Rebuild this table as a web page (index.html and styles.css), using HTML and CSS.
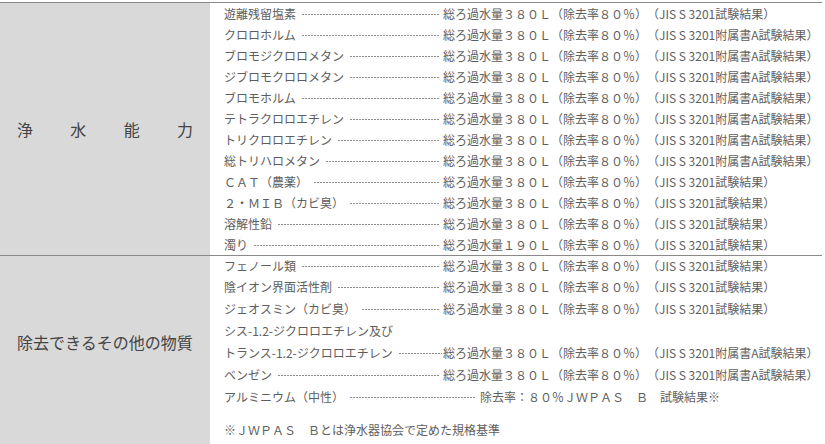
FILE: index.html
```html
<!DOCTYPE html>
<html lang="ja">
<head>
  <meta charset="UTF-8" />
  <title>浄水能力</title>
  <meta name="viewport" content="width=device-width, initial-scale=1.0"/>
  <link rel="stylesheet" href="styles.css">
</head>
<body>
  <div class="spec">

    <div class="section">
      <div class="label label-spread">
        <span>浄</span><span>水</span><span>能</span><span>力</span>
      </div>
      <ul class="list">
        <li class="item"><span class="head"><span class="name">遊離残留塩素</span><span class="leader"></span></span><span class="value">総ろ過水量３８０Ｌ（除去率８０％）（JIS S 3201試験結果）</span></li>
        <li class="item"><span class="head"><span class="name">クロロホルム</span><span class="leader"></span></span><span class="value">総ろ過水量３８０Ｌ（除去率８０％）（JIS S 3201附属書A試験結果）</span></li>
        <li class="item"><span class="head"><span class="name">ブロモジクロロメタン</span><span class="leader"></span></span><span class="value">総ろ過水量３８０Ｌ（除去率８０％）（JIS S 3201附属書A試験結果）</span></li>
        <li class="item"><span class="head"><span class="name">ジブロモクロロメタン</span><span class="leader"></span></span><span class="value">総ろ過水量３８０Ｌ（除去率８０％）（JIS S 3201附属書A試験結果）</span></li>
        <li class="item"><span class="head"><span class="name">ブロモホルム</span><span class="leader"></span></span><span class="value">総ろ過水量３８０Ｌ（除去率８０％）（JIS S 3201附属書A試験結果）</span></li>
        <li class="item"><span class="head"><span class="name">テトラクロロエチレン</span><span class="leader"></span></span><span class="value">総ろ過水量３８０Ｌ（除去率８０％）（JIS S 3201附属書A試験結果）</span></li>
        <li class="item"><span class="head"><span class="name">トリクロロエチレン</span><span class="leader"></span></span><span class="value">総ろ過水量３８０Ｌ（除去率８０％）（JIS S 3201附属書A試験結果）</span></li>
        <li class="item"><span class="head"><span class="name">総トリハロメタン</span><span class="leader"></span></span><span class="value">総ろ過水量３８０Ｌ（除去率８０％）（JIS S 3201附属書A試験結果）</span></li>
        <li class="item"><span class="head"><span class="name">ＣＡＴ（農薬）</span><span class="leader"></span></span><span class="value">総ろ過水量３８０Ｌ（除去率８０％）（JIS S 3201試験結果）</span></li>
        <li class="item"><span class="head"><span class="name">２・ＭＩＢ（カビ臭）</span><span class="leader"></span></span><span class="value">総ろ過水量３８０Ｌ（除去率８０％）（JIS S 3201試験結果）</span></li>
        <li class="item"><span class="head"><span class="name">溶解性鉛</span><span class="leader"></span></span><span class="value">総ろ過水量３８０Ｌ（除去率８０％）（JIS S 3201試験結果）</span></li>
        <li class="item"><span class="head"><span class="name">濁り</span><span class="leader"></span></span><span class="value">総ろ過水量１９０Ｌ（除去率８０％）（JIS S 3201試験結果）</span></li>
      </ul>
    </div>

    <div class="section section-other">
      <div class="label label-top">除去できるその他の物質</div>
      <ul class="list list-loose">
        <li class="item"><span class="head"><span class="name">フェノール類</span><span class="leader"></span></span><span class="value">総ろ過水量３８０Ｌ（除去率８０％）（JIS S 3201試験結果）</span></li>
        <li class="item"><span class="head"><span class="name">陰イオン界面活性剤</span><span class="leader"></span></span><span class="value">総ろ過水量３８０Ｌ（除去率８０％）（JIS S 3201試験結果）</span></li>
        <li class="item"><span class="head"><span class="name">ジェオスミン（カビ臭）</span><span class="leader"></span></span><span class="value">総ろ過水量３８０Ｌ（除去率８０％）（JIS S 3201試験結果）</span></li>
        <li class="item"><span class="head"><span class="name">シス-1.2-ジクロロエチレン及び</span></span></li>
        <li class="item item-tight"><span class="head"><span class="name">トランス-1.2-ジクロロエチレン</span><span class="leader"></span></span><span class="value">総ろ過水量３８０Ｌ（除去率８０％）（JIS S 3201附属書A試験結果）</span></li>
        <li class="item"><span class="head"><span class="name">ベンゼン</span><span class="leader"></span></span><span class="value">総ろ過水量３８０Ｌ（除去率８０％）（JIS S 3201附属書A試験結果）</span></li>
        <li class="item item-wide"><span class="head"><span class="name">アルミニウム（中性）</span><span class="leader"></span></span><span class="value">除去率：８０％ＪＷＰＡＳ　Ｂ　試験結果※</span></li>
        <li class="note">※ＪＷＰＡＳ　Ｂとは浄水器協会で定めた規格基準</li>
      </ul>
    </div>

  </div>
</body>
</html>
```

FILE: styles.css
```css
body {
  margin: 0;
  padding-top: 2px;
  background: #fff;
  color: #5e5e5e;
  font-family: "Noto Sans CJK JP", "Noto Sans", sans-serif;
  text-spacing-trim: space-all;
}
.spec {
  width: 822px;
  border-top: 1px solid #8a8a8a;
}
.section {
  display: grid;
  grid-template-columns: 210px 1fr;
  border-bottom: 1px solid #8a8a8a;
}
.section-other {
  border-bottom: none;
}
.label {
  background: #d9d9d9;
  color: #444;
  font-size: 16px;
  padding: 0 17px;
}
.label-spread {
  display: flex;
  justify-content: space-between;
  align-items: center;
}
.label-top {
  padding-top: 75px;
  line-height: 22px;
  white-space: nowrap;
}
.list {
  list-style: none;
  margin: 0;
  padding: 0 0 0 14px;
  font-size: 12px;
  line-height: 21px;
}
.list-loose {
  line-height: 22px;
  padding-bottom: 10px;
}
.list-loose .item:first-child {
  line-height: 20px;
}
.item {
  display: grid;
  grid-template-columns: 219px 1fr;
  white-space: nowrap;
}
.item-wide {
  grid-template-columns: 256px 1fr;
}
.head {
  display: flex;
  align-items: center;
}
.leader {
  flex: 1;
  height: 1px;
  margin: 1px 3px 0 6px;
  background: repeating-linear-gradient(to right, #8c8c8c 0 2px, transparent 2px 3px);
}
.item-tight .leader {
  margin-right: 1px;
}
.item-wide .leader {
  margin-right: 5px;
}
.note {
  margin-top: 11px;
}
```
